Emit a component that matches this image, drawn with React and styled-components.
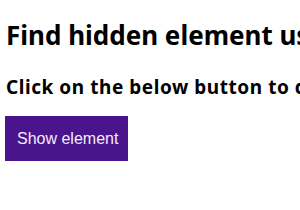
import styled, { createGlobalStyle } from 'styled-components';

const GlobalStyle = createGlobalStyle`
body {
  margin: 0;
  background: #ffffff;
}
`;

const Page = styled.div`
display: flex;
flex-direction: column;
align-items: flex-start;
padding: 19px 0 0 5px;
white-space: nowrap;
overflow: hidden;
width: 300px;
box-sizing: border-box;
`;

const Title = styled.h1`
margin: 0 0 0 1px;
font-family: "Noto Sans", "Open Sans", sans-serif;
font-weight: 700;
font-size: 26px;
line-height: 32px;
color: #000;
`;

const Subtitle = styled.h3`
margin: 24px 0 0 1px;
font-family: "Noto Sans", "Open Sans", sans-serif;
font-weight: 700;
font-size: 19px;
letter-spacing: 0.55px;
line-height: 24px;
color: #000;
`;

const ShowButton = styled.button`
margin-top: 17px;
height: 45px;
width: 123px;
padding: 0 12px;
border: none;
background: #4a148c;
color: #f3eefb;
font-family: "Liberation Sans", Arial, sans-serif;
font-size: 16px;
cursor: pointer;
`;

function App() {
  return (
    <>
      <GlobalStyle />
      <Page>
        <Title>Find hidden element using jQuery</Title>
        <Subtitle>Click on the below button to display the element</Subtitle>
        <ShowButton>Show element</ShowButton>
      </Page>
    </>
  );
}

export default App;
